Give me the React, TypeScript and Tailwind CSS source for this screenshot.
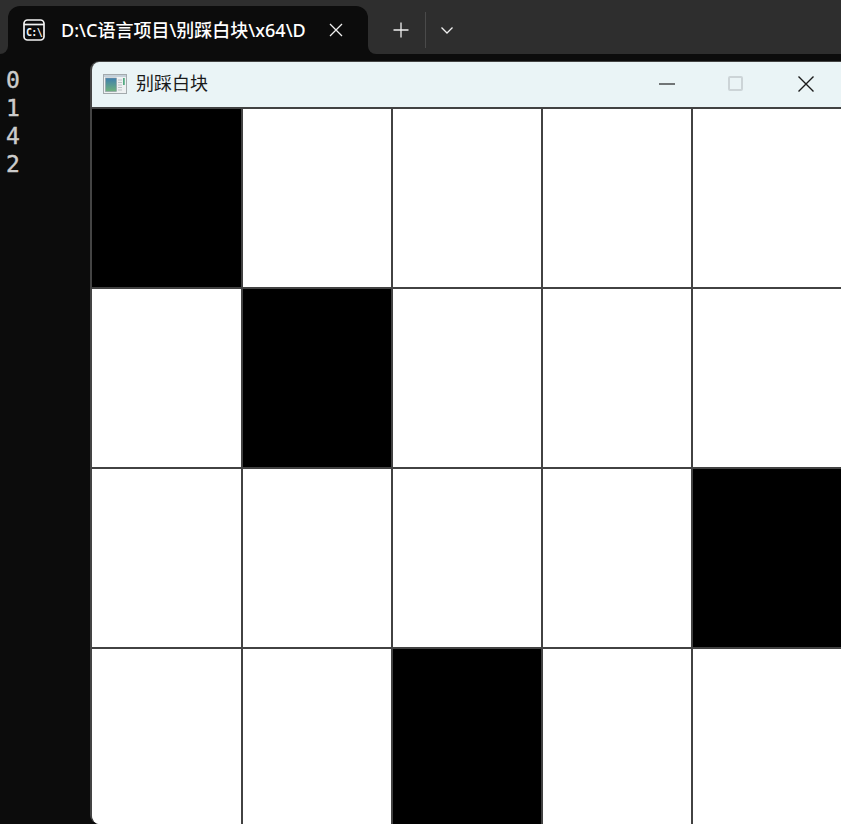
const CELLS = [
  [1, 0, 0, 0, 0],
  [0, 1, 0, 0, 0],
  [0, 0, 0, 0, 1],
  [0, 0, 1, 0, 0],
];

function ConsoleIcon() {
  return (
    <svg width="22" height="22" viewBox="0 0 22 22" fill="none" className="shrink-0">
      <rect x="1" y="1" width="20" height="20" rx="3.5" stroke="#f4f4f4" strokeWidth="1.7" />
      <path d="M1 5.5H21" stroke="#f4f4f4" strokeWidth="1.7" />
      <text x="11" y="16.5" textAnchor="middle" fontSize="10" fontWeight="700" fill="#f4f4f4" fontFamily="'DejaVu Sans Mono', monospace" letterSpacing="-0.7">
        C:\
      </text>
    </svg>
  );
}

function AppIcon() {
  return (
    <svg width="24" height="20" viewBox="0 0 24 20" className="shrink-0">
      <defs>
        <linearGradient id="pane" x1="0" y1="0" x2="0" y2="1">
          <stop offset="0" stopColor="#3f7fae" />
          <stop offset="1" stopColor="#6fb27c" />
        </linearGradient>
      </defs>
      <rect x="0.5" y="0.5" width="23" height="19" fill="#eef1f2" stroke="#a3aaad" />
      <rect x="1" y="1" width="22" height="2" fill="#c4d0d9" />
      <rect x="2.5" y="4" width="11" height="13.5" fill="url(#pane)" stroke="#8d9aa3" strokeWidth="0.6" />
      <path d="M15 6h4M15 8.5h4M15 11h4M15 13.5h4M15 16h4" stroke="#bcc2c5" strokeWidth="1.2" />
      <rect x="20.2" y="4" width="1.4" height="7" fill="#2f9a68" />
    </svg>
  );
}

export default function App() {
  return (
    <div className="flex h-[824px] w-[841px] flex-col overflow-hidden bg-[#0c0c0c] font-['Noto_Sans','Noto_Sans_CJK_SC',sans-serif]">
      <div className="flex h-[54px] shrink-0 bg-[#0c0c0c]">
        <div className="w-2 rounded-br-lg bg-[#2e2e2e]" />
        <div className="w-[360px] bg-[#2e2e2e] pt-1.5">
          <div className="flex h-12 items-center rounded-t-xl bg-[#0c0c0c] pl-[15px] text-white">
            <ConsoleIcon />
            <span className="ml-[16px] w-[246px] overflow-hidden whitespace-nowrap text-[18px] font-medium">
              D:\C语言项目\别踩白块\x64\D
            </span>
            <svg width="14" height="14" viewBox="0 0 14 14" className="ml-[22px]" stroke="#f0f0f0" strokeWidth="1.3">
              <path d="M1 1l12 12M13 1L1 13" />
            </svg>
          </div>
        </div>
        <div className="flex flex-1 items-center rounded-bl-lg bg-[#2e2e2e] pt-1.5 text-white">
          <svg width="16" height="16" viewBox="0 0 16 16" className="ml-[25px]" stroke="#f0f0f0" strokeWidth="1.3">
            <path d="M8 0.5v15M0.5 8h15" />
          </svg>
          <div className="ml-[16px] h-9 w-px bg-[#4a4a4a]" />
          <svg width="14" height="14" viewBox="0 0 14 14" className="ml-[14px]" fill="none" stroke="#f0f0f0" strokeWidth="1.3">
            <path d="M1.5 4.5L7 10l5.5-5.5" />
          </svg>
        </div>
      </div>

      <div className="relative flex-1">
        <pre className="pl-[6px] pt-[12px] font-['DejaVu_Sans_Mono',monospace] text-[23px] leading-[28px] text-[#cccccc] [-webkit-text-stroke:0.4px_#cccccc]">
          {"0\n1\n4\n2"}
        </pre>

        <div className="absolute left-[90px] top-[7px] h-[763px] w-[800px] overflow-hidden rounded-[9px] border-l-2 border-t border-[#444444]">
          <div className="flex h-[45px] items-center bg-[#eaf4f6] pb-[2px] pl-[11px]">
            <AppIcon />
            <span className="ml-[9px] text-[18px] text-[#1a1a1a]">别踩白块</span>
            <svg width="16" height="2" viewBox="0 0 16 2" className="ml-[451px]">
              <rect width="16" height="1.2" y="0.4" fill="#222222" />
            </svg>
            <div className="ml-[53px] h-[15px] w-[15px] rounded-[2px] border-2 border-[#ccd4d7]" />
            <svg width="16" height="16" viewBox="0 0 16 16" className="ml-[55px]" stroke="#1a1a1a" strokeWidth="1.4">
              <path d="M0.5 0.5l15 15M15.5 0.5l-15 15" />
            </svg>
          </div>
          <div className="grid grid-cols-[151px_repeat(4,150px)] grid-rows-[repeat(4,180px)] border-t-2 border-[#424242] bg-white">
            {CELLS.flat().map((on, i) => (
              <div key={i} className={`border-b-2 border-r-2 border-[#424242] ${on ? "bg-black" : "bg-white"}`} />
            ))}
          </div>
        </div>
      </div>
    </div>
  );
}
